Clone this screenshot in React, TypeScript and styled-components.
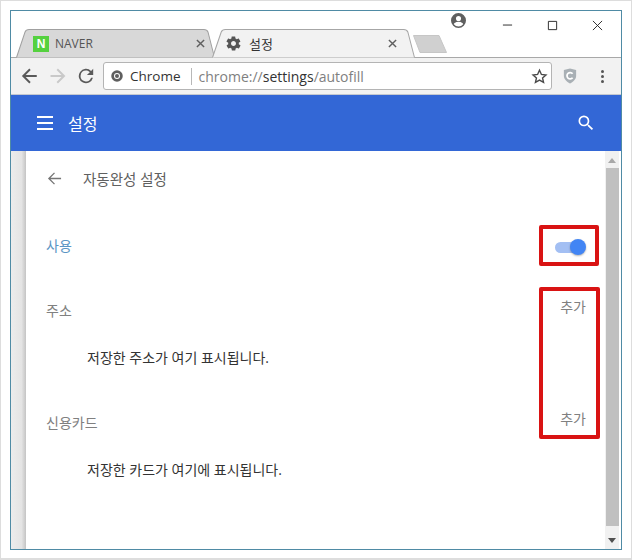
import React from 'react';
import styled, { createGlobalStyle } from 'styled-components';

const GlobalStyle = createGlobalStyle`
  html, body {
    margin: 0;
    padding: 0;
    background: #ffffff;
  }
  * {
    box-sizing: border-box;
  }
`;

const FONT = `'Open Sans', 'Noto Sans CJK KR', sans-serif`;

function TabShape({ active }: { active?: boolean }) {
  return (
    <TabSvg viewBox="0 0 198 29" preserveAspectRatio="none">
      <path
        d="M0.5 28.5 L9 3 Q10 0.5 13 0.5 L187 0.5 Q190 0.5 191 3 L197.5 28.5"
        fill={active ? '#f2f2f2' : '#d8d8d8'}
        stroke={active ? '#a6a6a6' : '#a0a0a0'}
      />
    </TabSvg>
  );
}

function CloseIcon() {
  return (
    <TabClose viewBox="0 0 10 10">
      <path d="M1 1 L9 9 M9 1 L1 9" stroke="#5f5f5f" strokeWidth="1.6" fill="none" />
    </TabClose>
  );
}

export default function App() {
  return (
    <Page>
      <GlobalStyle />
      <Window>
        <TitleBar>
          <TabStrip>
            <Tab $width={199}>
              <TabShape />
              <NaverLogo>N</NaverLogo>
              <TabTitle>NAVER</TabTitle>
              <CloseIcon />
            </Tab>
            <Tab $width={203} $active>
              <TabShape active />
              <GearIcon viewBox="0 0 24 24">
                <path
                  fill="#555"
                  d="M19.4 13c.1-.3.1-.7.1-1s0-.7-.1-1l2.1-1.6c.2-.2.2-.4.1-.6l-2-3.5c-.1-.2-.4-.3-.6-.2l-2.5 1c-.5-.4-1.1-.7-1.7-1l-.4-2.6c0-.3-.2-.5-.5-.5h-4c-.3 0-.5.2-.5.4l-.4 2.7c-.6.2-1.1.6-1.7 1l-2.5-1c-.2-.1-.5 0-.6.2l-2 3.5c-.1.2-.1.5.1.6L4.6 11c-.1.3-.1.7-.1 1s0 .7.1 1l-2.1 1.6c-.2.2-.2.4-.1.6l2 3.5c.1.2.4.3.6.2l2.5-1c.5.4 1.1.7 1.7 1l.4 2.6c0 .3.2.5.5.5h4c.3 0 .5-.2.5-.4l.4-2.7c.6-.2 1.1-.6 1.7-1l2.5 1c.2.1.5 0 .6-.2l2-3.5c.1-.2.1-.5-.1-.6L19.4 13zM12 15.5c-1.9 0-3.5-1.6-3.5-3.5s1.6-3.5 3.5-3.5 3.5 1.6 3.5 3.5-1.6 3.5-3.5 3.5z"
                />
              </GearIcon>
              <TabTitle $active>설정</TabTitle>
              <CloseIcon />
            </Tab>
            <NewTab viewBox="0 0 34 18">
              <path d="M0.5 0.5 L26 0.5 L33.5 17.5 L7 17.5 Z" fill="#d0d0d0" stroke="#c6c6c6" />
            </NewTab>
          </TabStrip>
          <WindowControls>
            <ProfileIcon viewBox="2 2 20 20">
              <path
                fill="#5f5f5f"
                d="M12 2a10 10 0 1 0 0 20 10 10 0 0 0 0-20zm0 4a3.4 3.4 0 1 1 0 6.8A3.4 3.4 0 0 1 12 6zm0 14a7.9 7.9 0 0 1-6.2-3c.1-2 4.1-3.2 6.2-3.2s6.1 1.2 6.2 3.2A7.9 7.9 0 0 1 12 20z"
              />
            </ProfileIcon>
            <WinButton viewBox="0 0 12 12" $gap={36}>
              <path d="M1 5.5 H11" stroke="#222" fill="none" />
            </WinButton>
            <WinButton viewBox="0 0 12 12" $gap={34}>
              <path d="M1.5 1.5 H10.5 V10.5 H1.5 Z" stroke="#222" fill="none" />
            </WinButton>
            <WinButton viewBox="0 0 12 12" $gap={34}>
              <path d="M1 1 L11 11 M11 1 L1 11" stroke="#222" fill="none" />
            </WinButton>
          </WindowControls>
        </TitleBar>
        <Toolbar>
          <NavGroup>
            <NavIcon viewBox="0 0 24 24">
              <path d="M21 12H3M12 3l-9 9 9 9" stroke="#5a5a5a" strokeWidth="2.6" fill="none" />
            </NavIcon>
            <NavIcon viewBox="0 0 24 24">
              <path d="M2 12h18M11 3l9 9-9 9" stroke="#c9c9c9" strokeWidth="2.6" fill="none" />
            </NavIcon>
            <NavIcon viewBox="2 2 20 20">
              <path
                fill="#5a5a5a"
                d="M17.65 6.35A8 8 0 1 0 19.73 14h-2.08A6 6 0 1 1 12 6c1.66 0 3.14.69 4.22 1.78L13 11h7V4l-2.35 2.35z"
              />
            </NavIcon>
          </NavGroup>
          <Omnibox>
            <ChromeIcon viewBox="0 0 24 24">
              <circle cx="12" cy="12" r="11.5" fill="#5f5f5f" />
              <circle cx="12" cy="12" r="6" fill="#ffffff" />
              <circle cx="12" cy="12" r="4" fill="#5f5f5f" />
            </ChromeIcon>
            <OriginLabel>Chrome</OriginLabel>
            <OmniDivider />
            <UrlText>
              chrome://<strong>settings</strong>/autofill
            </UrlText>
            <StarIcon viewBox="0 0 24 24">
              <path
                d="M12 3.2l2.7 5.9 6.4.7-4.8 4.3 1.4 6.3L12 17.2l-5.7 3.2 1.4-6.3-4.8-4.3 6.4-.7z"
                fill="none"
                stroke="#4a4a4a"
                strokeWidth="2"
              />
            </StarIcon>
          </Omnibox>
          <ExtIcon viewBox="0 0 16 18">
            <path d="M1 2 L8 0.5 L15 2 V9 C15 13 11 16 8 17.5 C5 16 1 13 1 9 Z" fill="#a9b0b5" />
            <path d="M11 6.5 A3.6 3.6 0 1 0 11 11" stroke="#ffffff" strokeWidth="2" fill="none" />
          </ExtIcon>
          <MenuDots>
            <i />
            <i />
            <i />
          </MenuDots>
        </Toolbar>
        <BlueHeader>
          <Hamburger>
            <i />
            <i />
            <i />
          </Hamburger>
          <HeaderTitle>설정</HeaderTitle>
          <SearchIcon viewBox="0 0 24 24">
            <path
              fill="#ffffff"
              d="M15.5 14h-.79l-.28-.27A6.47 6.47 0 0 0 16 9.5 6.5 6.5 0 1 0 9.5 16c1.61 0 3.09-.59 4.23-1.57l.27.28v.79l5 4.99L20.49 19l-4.99-5zm-6 0C7.01 14 5 11.99 5 9.5S7.01 5 9.5 5 14 7.01 14 9.5 11.99 14 9.5 14z"
            />
          </SearchIcon>
        </BlueHeader>
        <Body>
          <SideShade />
          <Panel>
            <SubHeader>
              <BackIcon viewBox="0 0 16 16">
                <path d="M15 8H2M8 2L2 8l6 6" stroke="#757575" strokeWidth="1.4" fill="none" />
              </BackIcon>
              <SubTitle>자동완성 설정</SubTitle>
            </SubHeader>
            <ToggleRow>
              <EnabledLabel>사용</EnabledLabel>
              <Toggle>
                <ToggleKnob />
              </Toggle>
            </ToggleRow>
            <Section>
              <SectionHead>
                <SectionLabel>주소</SectionLabel>
                <AddLink>추가</AddLink>
              </SectionHead>
              <EmptyText>저장한 주소가 여기 표시됩니다.</EmptyText>
            </Section>
            <Section>
              <SectionHead>
                <SectionLabel>신용카드</SectionLabel>
                <AddLink>추가</AddLink>
              </SectionHead>
              <EmptyText>저장한 카드가 여기에 표시됩니다.</EmptyText>
            </Section>
            <RedBox $top={74} $width={60} $height={41} />
            <RedBox $top={136} $width={61} $height={152} />
          </Panel>
          <Scrollbar>
            <ScrollArrow viewBox="0 0 10 6">
              <path d="M0 6 L5 0 L10 6 Z" fill="#a8a8a8" />
            </ScrollArrow>
            <ScrollThumb />
            <ScrollArrow viewBox="0 0 10 6" $down>
              <path d="M0 0 L10 0 L5 6 Z" fill="#505050" />
            </ScrollArrow>
          </Scrollbar>
        </Body>
      </Window>
    </Page>
  );
}

const Page = styled.div`
  width: 632px;
  height: 560px;
  padding: 10px;
  background: #ffffff;
  border: solid #dddddd;
  border-width: 1px 1px 2px 1px;
  font-family: ${FONT};
  overflow: hidden;
`;
const Window = styled.div`
  width: 612px;
  height: 540px;
  margin: -1px 0 0 -1px;
  border: 1px solid #4f8ba5;
  display: flex;
  flex-direction: column;
  background: #ffffff;
`;
const TitleBar = styled.div`
  height: 47px;
  flex: none;
  display: flex;
  justify-content: space-between;
  position: relative;
  background: #ffffff;
`;
const TabStrip = styled.div`
  display: flex;
  align-items: flex-end;
  padding-left: 5px;
`;
const Tab = styled.div<{ $active?: boolean; $width: number }>`
  position: relative;
  width: ${(p) => p.$width}px;
  height: 29px;
  margin-right: -3px;
  display: flex;
  align-items: center;
  padding: 0 ${(p) => (p.$active ? '18px' : '10px')} 0 ${(p) => (p.$active ? '13px' : '17px')};
  z-index: ${(p) => (p.$active ? 2 : 1)};
`;
const TabSvg = styled.svg`
  position: absolute;
  inset: 0;
  width: 100%;
  height: 100%;
`;
const TabClose = styled.svg`
  width: 9px;
  height: 9px;
  position: relative;
  flex: none;
  margin-left: auto;
`;
const GearIcon = styled.svg`
  position: relative;
  width: 17px;
  height: 17px;
  flex: none;
`;
const NaverLogo = styled.div`
  position: relative;
  width: 16px;
  height: 16px;
  flex: none;
  background: #55d13f;
  color: #ffffff;
  font: 800 12px/16px 'Liberation Sans', sans-serif;
  text-align: center;
`;
const TabTitle = styled.span<{ $active?: boolean }>`
  position: relative;
  margin-left: ${(p) => (p.$active ? '7px' : '6px')};
  font-size: ${(p) => (p.$active ? '13px' : '12px')};
  color: ${(p) => (p.$active ? '#333333' : '#555555')};
`;
const NewTab = styled.svg`
  width: 34px;
  height: 18px;
  margin: 0 0 5px 1px;
  flex: none;
`;
const WindowControls = styled.div`
  display: flex;
  align-items: flex-start;
  padding: 2px 18px 0 0;
`;
const ProfileIcon = styled.svg`
  width: 15px;
  height: 15px;
  flex: none;
`;
const WinButton = styled.svg<{ $gap: number }>`
  width: 11px;
  height: 11px;
  margin: 7px 0 0 ${(p) => p.$gap}px;
  flex: none;
`;
const Toolbar = styled.div`
  height: 38px;
  flex: none;
  display: flex;
  align-items: center;
  padding-left: 10px;
  background: #f2f2f2;
  border-top: 1px solid #a8a8a8;
  border-bottom: 1px solid #c4c8d0;
  margin-top: -1px;
  position: relative;
`;
const NavGroup = styled.div`
  display: flex;
  gap: 10px;
  margin-right: 8px;
`;
const NavIcon = styled.svg`
  width: 18px;
  height: 18px;
  flex: none;
`;
const Omnibox = styled.div`
  width: 449px;
  height: 28px;
  flex: none;
  display: flex;
  align-items: center;
  padding: 0 3px 0 7px;
  background: #ffffff;
  border: 1px solid #b4b4b4;
  border-radius: 3px;
  font-size: 14px;
`;
const ChromeIcon = styled.svg`
  width: 12px;
  height: 12px;
  flex: none;
`;
const OriginLabel = styled.span`
  margin-left: 7px;
  color: #333333;
  font-size: 13.5px;
`;
const OmniDivider = styled.span`
  width: 1px;
  height: 17px;
  margin: 0 7px 0 10px;
  background: #b8b8b8;
`;
const UrlText = styled.span`
  color: #808080;
  strong {
    font-weight: 400;
    color: #333333;
  }
`;
const StarIcon = styled.svg`
  width: 17px;
  height: 17px;
  margin-left: auto;
  flex: none;
`;
const ExtIcon = styled.svg`
  width: 14px;
  height: 16px;
  margin-left: 11px;
  flex: none;
`;
const MenuDots = styled.div`
  display: flex;
  flex-direction: column;
  gap: 2px;
  margin-left: 24px;
  i {
    width: 3px;
    height: 3px;
    border-radius: 50%;
    background: #555555;
  }
`;
const BlueHeader = styled.div`
  height: 56px;
  flex: none;
  display: flex;
  align-items: center;
  padding: 0 25px 0 26px;
  background: #3367d6;
`;
const Hamburger = styled.div`
  display: flex;
  flex-direction: column;
  gap: 4px;
  i {
    width: 16px;
    height: 2px;
    background: #ffffff;
  }
`;
const HeaderTitle = styled.span`
  margin-left: 15px;
  font-size: 16px;
  color: #ffffff;
`;
const SearchIcon = styled.svg`
  width: 20px;
  height: 20px;
  margin-left: auto;
  flex: none;
`;
const Body = styled.div`
  flex: 1;
  min-height: 0;
  display: flex;
  background: #ffffff;
`;
const SideShade = styled.div`
  width: 15px;
  flex: none;
  background: linear-gradient(to right, #ececec 0%, #e4e4e4 70%, #c4c4c4 100%);
`;
const Panel = styled.div`
  flex: 1;
  min-width: 0;
  position: relative;
  padding: 0 19px 0 20px;
`;
const SubHeader = styled.div`
  height: 55px;
  display: flex;
  align-items: center;
  padding-left: 1px;
`;
const BackIcon = styled.svg`
  width: 15px;
  height: 15px;
  flex: none;
`;
const SubTitle = styled.span`
  margin-left: 21px;
  font-size: 14.5px;
  color: #606060;
`;
const ToggleRow = styled.div`
  display: flex;
  align-items: center;
  justify-content: space-between;
  height: 22px;
  margin-top: 28px;
`;
const EnabledLabel = styled.span`
  font-size: 14px;
  color: #5b95c4;
`;
const Toggle = styled.div`
  position: relative;
  width: 30px;
  height: 11px;
  margin: 5px 1px 0 0;
  border-radius: 6px;
  background: #a3bff3;
`;
const ToggleKnob = styled.div`
  position: absolute;
  right: -1px;
  top: -3px;
  width: 16px;
  height: 16px;
  border-radius: 50%;
  background: #4285f4;
  box-shadow: 0 1px 2px rgba(0, 0, 0, 0.3);
`;
const Section = styled.div`
  height: 112px;
  padding-top: 41px;
`;
const SectionHead = styled.div`
  display: flex;
  align-items: center;
  justify-content: space-between;
  height: 28px;
  margin-bottom: 23px;
`;
const SectionLabel = styled.span`
  font-size: 14px;
  line-height: 20px;
  color: #808080;
`;
const AddLink = styled.span`
  font-size: 14px;
  line-height: 20px;
  margin-bottom: 8px;
  color: #808080;
`;
const EmptyText = styled.div`
  padding-left: 41px;
  font-size: 14px;
  line-height: 20px;
  color: #333333;
`;
const RedBox = styled.div<{ $top: number; $width: number; $height: number }>`
  position: absolute;
  left: 513px;
  top: ${(p) => p.$top}px;
  width: ${(p) => p.$width}px;
  height: ${(p) => p.$height}px;
  border: 4px solid #d91313;
  border-radius: 2px;
`;
const Scrollbar = styled.div`
  width: 14px;
  margin-right: 2px;
  flex: none;
  display: flex;
  flex-direction: column;
  align-items: center;
  background: #f1f1f1;
`;
const ScrollArrow = styled.svg<{ $down?: boolean }>`
  width: 8px;
  height: 5px;
  margin: ${(p) => (p.$down ? '12px 0 6px' : '7px 0 5px')};
  flex: none;
`;
const ScrollThumb = styled.div`
  flex: 1;
  width: 13px;
  align-self: flex-end;
  background: #c0c0c0;
`;
